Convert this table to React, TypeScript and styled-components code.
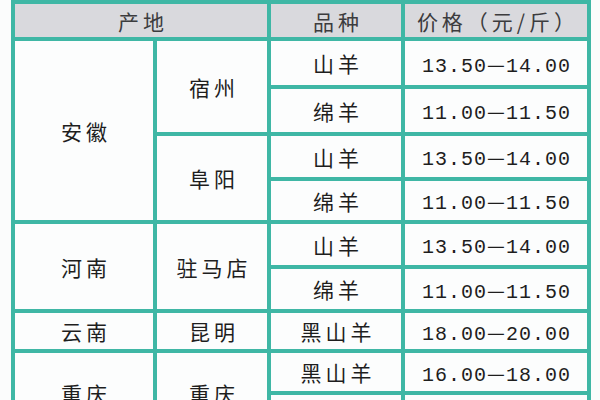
import React from "react";
import styled, { createGlobalStyle } from "styled-components";

const GlobalStyle = createGlobalStyle`
  html, body {
    margin: 0;
    padding: 0;
    overflow: hidden;
    background: #fbfcfc;
  }
`;

const Page = styled.div`
  padding-left: 11px;
`;

const Table = styled.table`
  width: 580px;
  table-layout: fixed;
  border-collapse: separate;
  border-spacing: 4px;
  background: #3fb7a5;
  font-family: "Noto Sans CJK SC", "Noto Sans", sans-serif;
`;

const Row = styled.tr<{ $h: number }>`
  height: ${(p) => p.$h}px;
`;

const HeadCell = styled.th`
  padding: 0;
  background: #d9d9dd;
  color: #3c3c3e;
  font-size: 21px;
  font-weight: 400;
  letter-spacing: 4px;
  text-indent: 4px;
  text-align: center;
`;

const Cell = styled.td`
  padding: 0;
  background: #fcfdfd;
  color: #1e1e1e;
  font-size: 21px;
  letter-spacing: 4px;
  text-indent: 4px;
  text-align: center;
  vertical-align: middle;
`;

const PriceCell = styled(Cell)`
  font-family: "Liberation Mono", monospace;
  font-size: 20px;
  letter-spacing: 1px;
  text-indent: 1px;
`;

const Dash = styled.span`
  font-family: "Noto Sans CJK SC", sans-serif;
`;

type Item = [string, string];
type City = { name: string; items: Item[] };
type Group = { province: string; cities: City[] };

const groups: Group[] = [
  {
    province: "安徽",
    cities: [
      { name: "宿州", items: [["山羊", "13.50—14.00"], ["绵羊", "11.00—11.50"]] },
      { name: "阜阳", items: [["山羊", "13.50—14.00"], ["绵羊", "11.00—11.50"]] },
    ],
  },
  {
    province: "河南",
    cities: [{ name: "驻马店", items: [["山羊", "13.50—14.00"], ["绵羊", "11.00—11.50"]] }],
  },
  {
    province: "云南",
    cities: [{ name: "昆明", items: [["黑山羊", "18.00—20.00"]] }],
  },
  {
    province: "重庆",
    cities: [{ name: "重庆", items: [["黑山羊", "16.00—18.00"], ["白山羊", "14.00—16.00"]] }],
  },
];

// row heights measured off the picture, top to bottom
const heights = [44, 43, 41, 39, 41, 40, 36, 38, 38];

const Price = ({ value }: { value: string }) => {
  const [from, to] = value.split("—");
  return (
    <>
      {from}
      <Dash>—</Dash>
      {to}
    </>
  );
};

export default function App() {
  const rows: React.ReactNode[] = [];
  let r = 0;

  groups.forEach((g) => {
    const span = g.cities.reduce((n, c) => n + c.items.length, 0);
    g.cities.forEach((c, ci) => {
      c.items.forEach(([kind, price], ii) => {
        rows.push(
          <Row key={r} $h={heights[r] ?? 38}>
            {ci === 0 && ii === 0 && <Cell rowSpan={span}>{g.province}</Cell>}
            {ii === 0 && <Cell rowSpan={c.items.length}>{c.name}</Cell>}
            <Cell>{kind}</Cell>
            <PriceCell>
              <Price value={price} />
            </PriceCell>
          </Row>
        );
        r++;
      });
    });
  });

  return (
    <Page>
      <GlobalStyle />
      <Table>
        <colgroup>
          <col style={{ width: 138 }} />
          <col style={{ width: 110 }} />
          <col style={{ width: 130 }} />
          <col style={{ width: 182 }} />
        </colgroup>
        <thead>
          <Row $h={33}>
            <HeadCell colSpan={2}>产地</HeadCell>
            <HeadCell>品种</HeadCell>
            <HeadCell>价格（元/斤）</HeadCell>
          </Row>
        </thead>
        <tbody>{rows}</tbody>
      </Table>
    </Page>
  );
}
